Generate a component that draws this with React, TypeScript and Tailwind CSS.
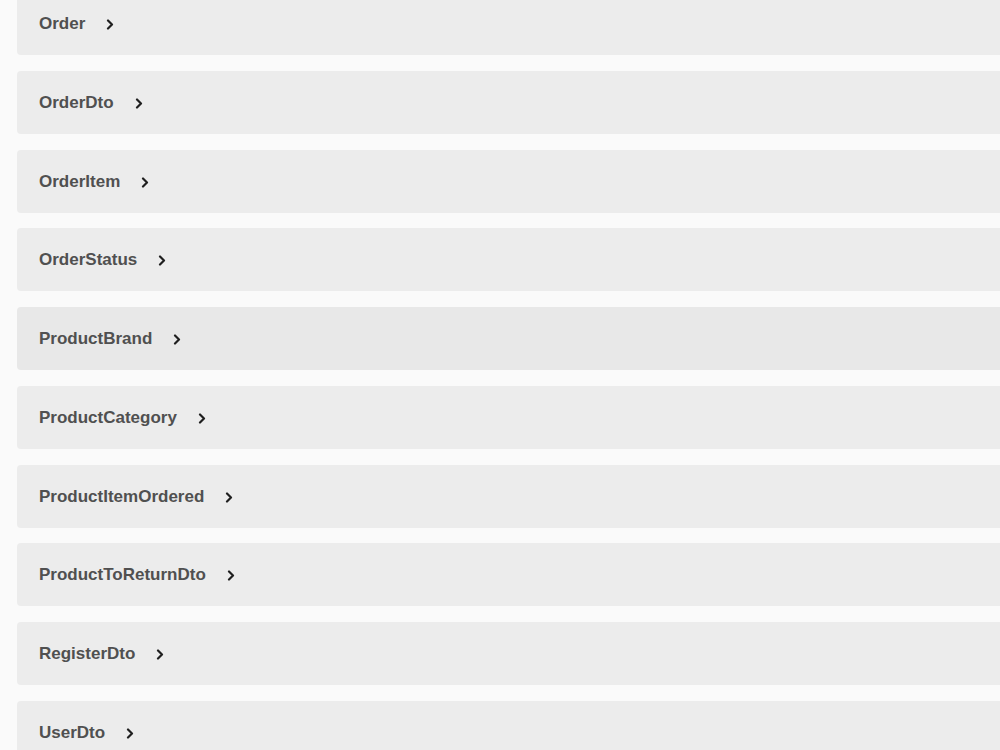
const MODELS = [
  'Order',
  'OrderDto',
  'OrderItem',
  'OrderStatus',
  'ProductBrand',
  'ProductCategory',
  'ProductItemOrdered',
  'ProductToReturnDto',
  'RegisterDto',
  'UserDto',
];

// highlighted row (hover state)
const ACTIVE = 'ProductBrand';

function Chevron() {
  return (
    <svg width="9" height="11" viewBox="0 0 9 11" className="shrink-0 mt-[2px]">
      <path d="M2 1.5 L6 5.5 L2 9.5" fill="none" stroke="#1f1f1f" strokeWidth="2.2" strokeLinecap="round" strokeLinejoin="round" />
    </svg>
  );
}

export default function App() {
  return (
    <div className="w-[1000px] h-[750px] overflow-hidden bg-[#fafafa]" style={{ fontFamily: '"Liberation Sans", Arial, sans-serif' }}>
      <div className="-mt-[8px] pl-[17px] flex flex-col gap-[15.75px]">
        {MODELS.map((name) => (
          <div
            key={name}
            className={`h-[63px] w-[1000px] rounded-[4px] flex items-center pl-[22px] gap-[21px] ${name === ACTIVE ? 'bg-[#e8e8e8]' : 'bg-[#ececec]'}`}
          >
            <span className="text-[17px] font-bold text-[#505050] leading-none">{name}</span>
            <Chevron />
          </div>
        ))}
      </div>
    </div>
  );
}
